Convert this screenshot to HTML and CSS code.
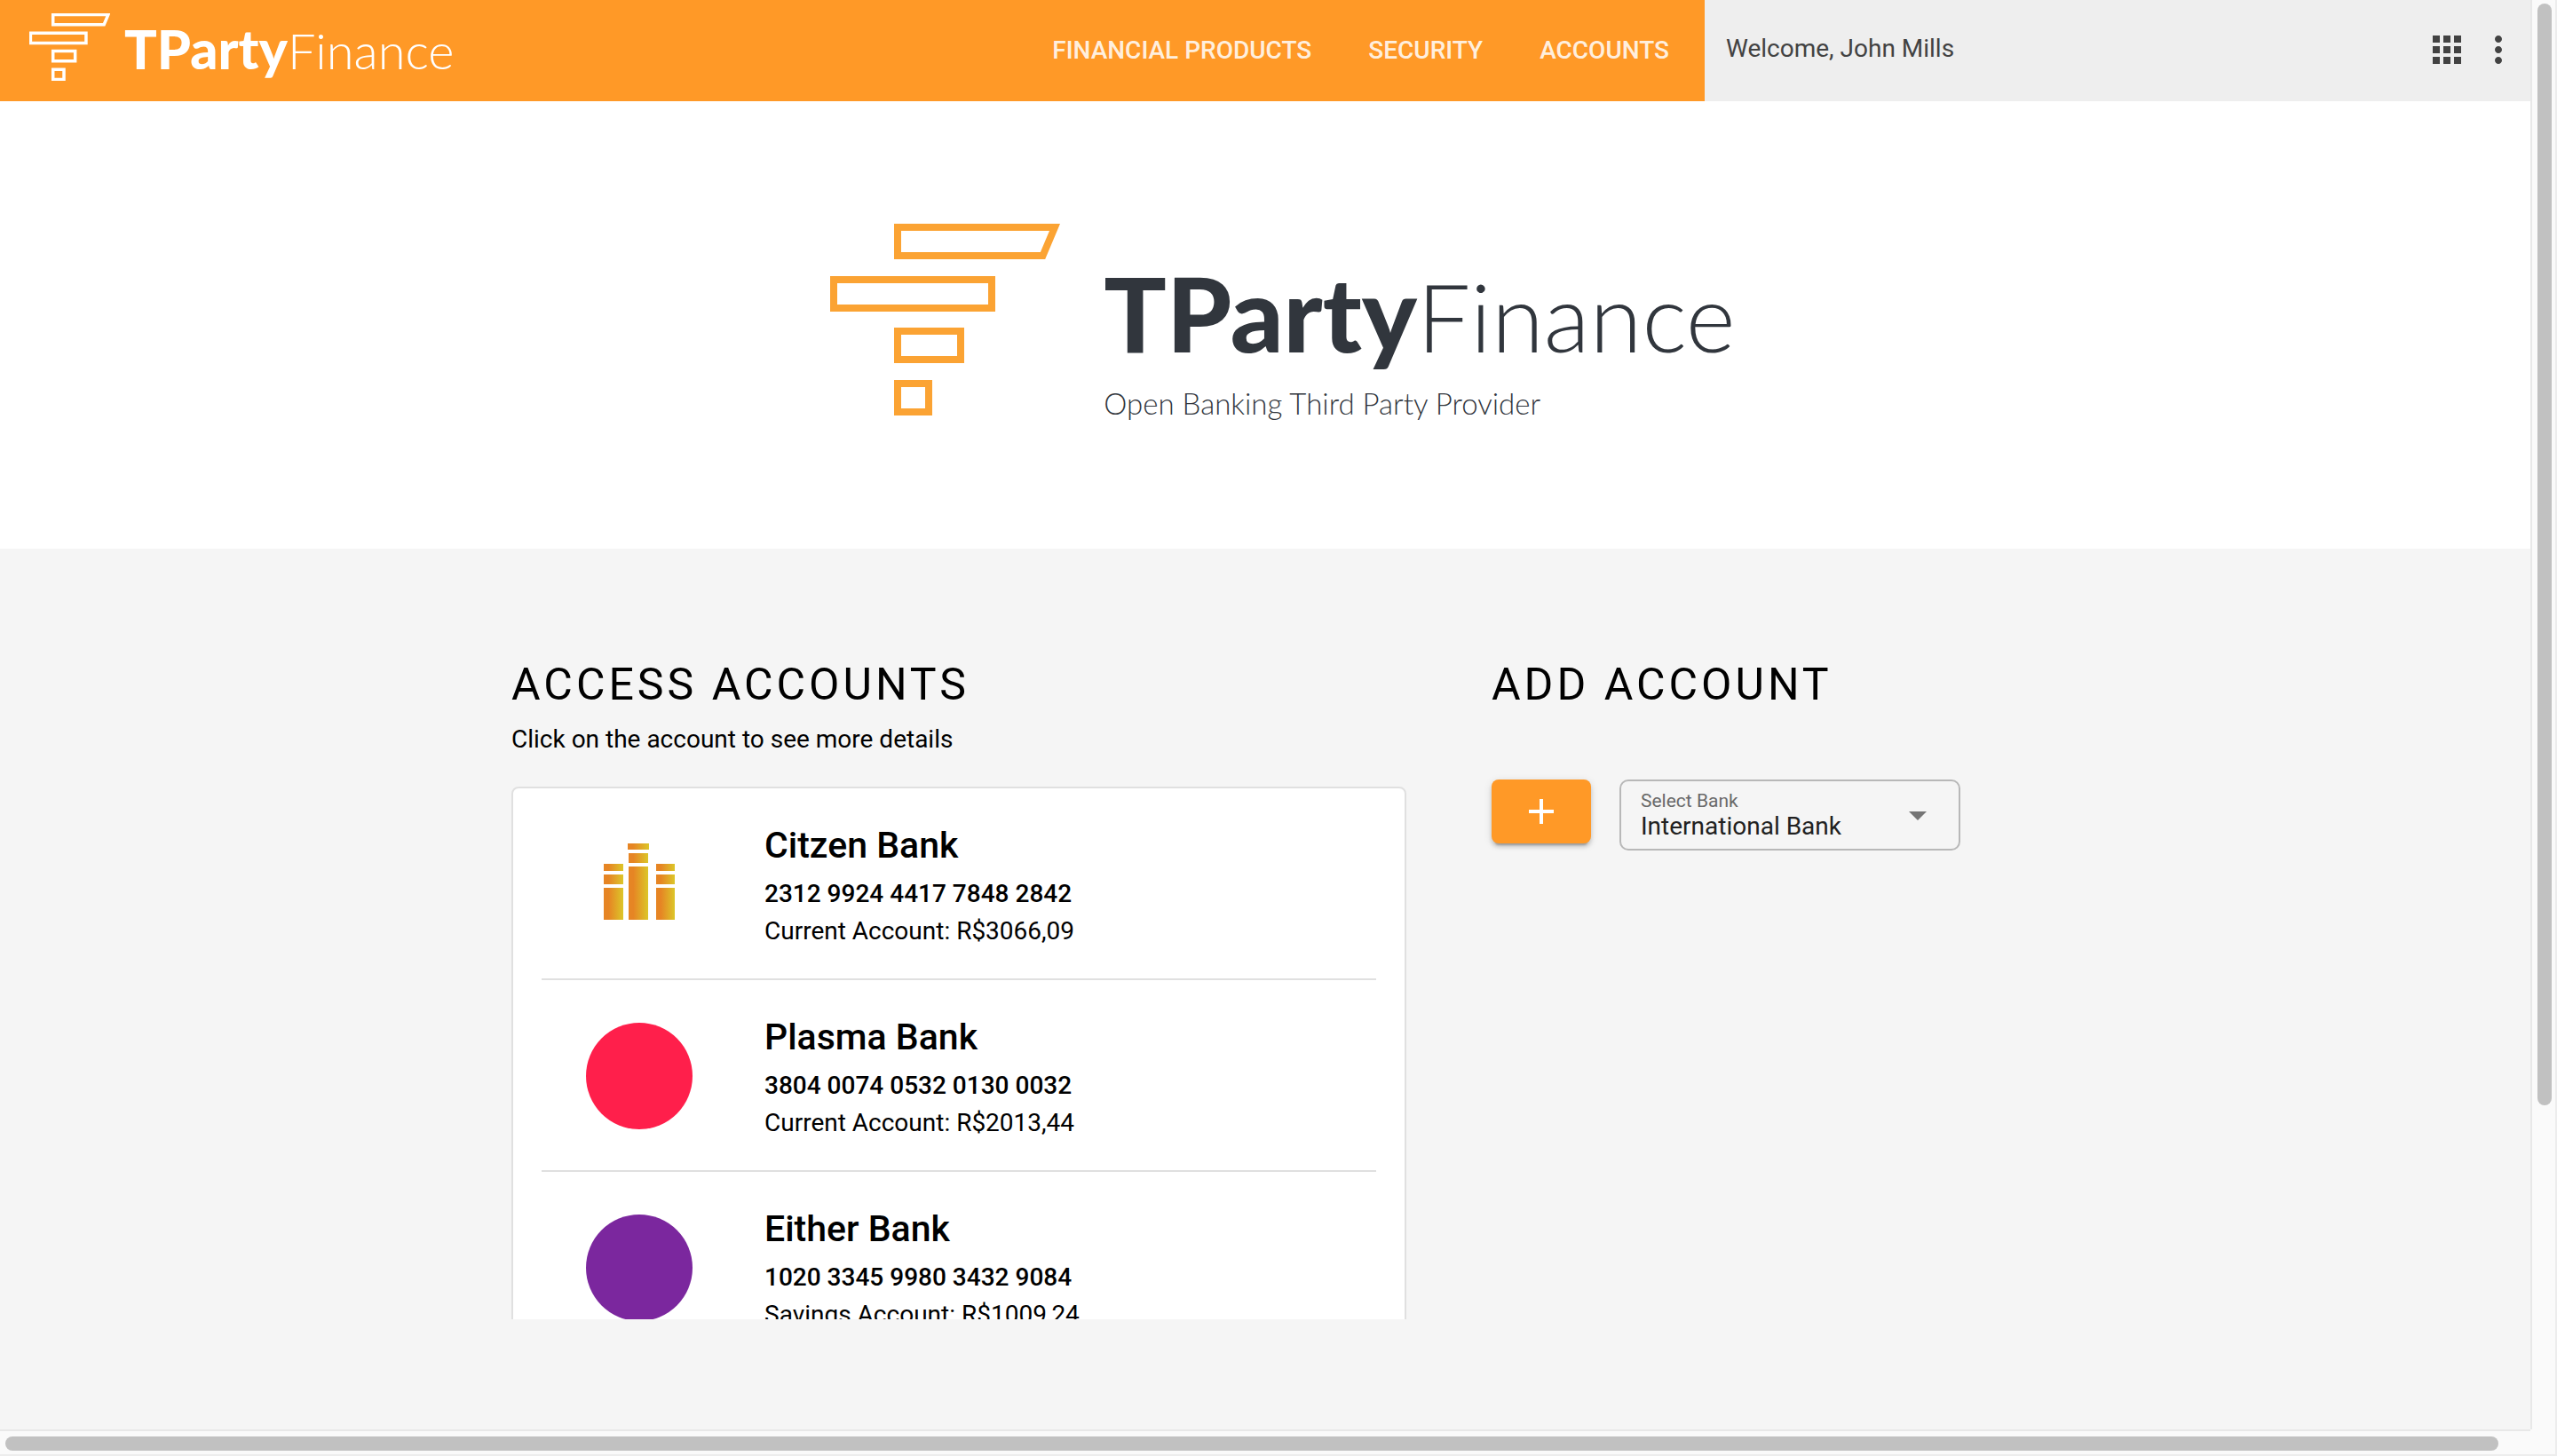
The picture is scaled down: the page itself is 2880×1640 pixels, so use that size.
FILE: index.html
```html
<!DOCTYPE html>
<html lang="en">
<head>
<meta charset="utf-8">
<meta name="viewport" content="width=device-width, initial-scale=1">
<title>TPartyFinance - Accounts</title>
<link rel="stylesheet" href="styles.css">
</head>
<body>
<svg class="symbols" aria-hidden="true">
  <symbol id="mark" viewBox="0 0 259 216">
    <path d="M76 4H253L239.500 36H76ZM4 63H182V95H4ZM76 121H147V153H76ZM76 180H111V212H76Z" fill="none" stroke="currentColor"/>
  </symbol>
</svg>
<div class="viewport">
  <div class="page">
    <header class="topbar">
      <div class="brandbar">
        <a class="brand" href="#" aria-label="TPartyFinance">
          <svg class="brand-mark" aria-hidden="true"><use href="#mark"/></svg>
          <span class="brand-name"><span class="brand-bold">TParty</span><span class="brand-thin">Finance</span></span>
        </a>
        <nav class="nav">
          <a href="#">FINANCIAL PRODUCTS</a>
          <a href="#">SECURITY</a>
          <a href="#">ACCOUNTS</a>
        </nav>
      </div>
      <div class="userbar">
        <span class="welcome">Welcome, John Mills</span>
        <div class="tools">
          <button type="button" class="icon-button" aria-label="Apps">
            <svg viewBox="0 0 24 24" width="48" height="48"><path d="M4 8h4V4H4v4zm6 12h4v-4h-4v4zm-6 0h4v-4H4v4zm0-6h4v-4H4v4zm6 0h4v-4h-4v4zm6-10v4h4V4h-4zm-6 4h4V4h-4v4zm6 6h4v-4h-4v4zm0 6h4v-4h-4v4z"/></svg>
          </button>
          <button type="button" class="icon-button" aria-label="More">
            <svg viewBox="0 0 24 24" width="48" height="48"><path d="M12 8c1.100 0 2-.9 2-2s-.9-2-2-2-2 .9-2 2 .9 2 2 2zm0 2c-1.100 0-2 .9-2 2s.9 2 2 2 2-.9 2-2-.9-2-2-2zm0 6c-1.100 0-2 .9-2 2s.9 2 2 2 2-.9 2-2-.9-2-2-2z"/></svg>
          </button>
        </div>
      </div>
    </header>

    <section class="hero">
      <div class="hero-logo">
        <svg class="hero-mark" aria-hidden="true"><use href="#mark"/></svg>
        <div class="hero-text">
          <div class="hero-name"><span class="brand-bold">TParty</span><span class="brand-thin">Finance</span></div>
          <p class="tagline">Open Banking Third Party Provider</p>
        </div>
      </div>
    </section>

    <main class="content">
      <section class="access">
        <h1>ACCESS ACCOUNTS</h1>
        <p class="hint">Click on the account to see more details</p>
        <div class="scroller">
          <ul class="accounts">
            <li>
              <a class="account" href="#">
                <svg class="logo" viewBox="0 0 120 120" aria-hidden="true">
                  <defs>
                    <linearGradient id="gold"><stop offset=".25" stop-color="#e68524"/><stop offset="1" stop-color="#dcc629"/></linearGradient>
                  </defs>
                  <g fill="url(#gold)">
                    <path d="M20 37h22v8H20z"/><path d="M20 49h22v11H20z"/><path d="M20 64h22v36H20z"/>
                    <path d="M47 14h24v7H47z"/><path d="M48 25h22v11H48z"/><path d="M48 40h22v60H48z"/>
                    <path d="M79 37h21v8H79z"/><path d="M79 49h21v11H79z"/><path d="M79 64h21v36H79z"/>
                  </g>
                </svg>
                <span class="details">
                  <span class="bank">Citzen Bank</span>
                  <span class="number">2312 9924 4417 7848 2842</span>
                  <span class="balance">Current Account: R$3066,09</span>
                </span>
              </a>
            </li>
            <li>
              <a class="account" href="#">
                <span class="logo disc plasma"></span>
                <span class="details">
                  <span class="bank">Plasma Bank</span>
                  <span class="number">3804 0074 0532 0130 0032</span>
                  <span class="balance">Current Account: R$2013,44</span>
                </span>
              </a>
            </li>
            <li>
              <a class="account" href="#">
                <span class="logo disc either"></span>
                <span class="details">
                  <span class="bank">Either Bank</span>
                  <span class="number">1020 3345 9980 3432 9084</span>
                  <span class="balance">Savings Account: R$1009,24</span>
                </span>
              </a>
            </li>
          </ul>
        </div>
      </section>

      <section class="add">
        <h1>ADD ACCOUNT</h1>
        <form class="add-form">
          <button type="button" class="add-button" aria-label="Add account">
            <svg viewBox="0 0 28 28" width="28" height="28"><path d="M12 0h4v12h12v4H16v12h-4V16H0v-4h12z" fill="#fff"/></svg>
          </button>
          <div class="field">
            <label for="bank">Select Bank</label>
            <select id="bank"><option>International Bank</option></select>
            <svg class="arrow" viewBox="0 0 20 10" aria-hidden="true"><path d="M0 0h20L10 10z"/></svg>
          </div>
        </form>
      </section>
    </main>
  </div>

  <div class="track track-y" aria-hidden="true"><div class="thumb"></div></div>
  <div class="track track-x" aria-hidden="true"><div class="thumb"></div></div>
  <div class="corner" aria-hidden="true"></div>
</div>
</body>
</html>
```
FILE: styles.css
```css
*, *::before, *::after { box-sizing: border-box; }

body {
  margin: 0;
  font: 400 28px/42px Roboto, "Liberation Sans", sans-serif;
  color: #000;
}

h1, p, ul { margin: 0; padding: 0; }
a { color: inherit; text-decoration: none; }
button { border: 0; padding: 0; cursor: pointer; }
.symbols { position: absolute; width: 0; height: 0; }

.viewport {
  display: grid;
  grid-template: minmax(0, 1fr) 30px / minmax(0, 1fr) 30px;
  height: 100vh;
}

.page {
  display: flex;
  flex-direction: column;
  overflow: hidden;
  background: #f5f5f5;
}

/* Top bar */
.topbar {
  display: flex;
  flex: none;
  height: 114px;
}

.brandbar {
  display: flex;
  flex: 1;
  align-items: center;
  justify-content: space-between;
  padding: 0 40px 0 33px;
  background: #ff9927;
}

.brand {
  display: flex;
  align-items: center;
  gap: 16px;
  color: #fff;
}

.brand-mark {
  width: 91px;
  height: 76px;
  margin-bottom: 8px;
  stroke-width: 10;
}

.brand-name, .hero-name {
  font-family: Lato, "Liberation Sans", sans-serif;
  white-space: nowrap;
}

.brand-name { font-size: 56px; line-height: 76px; padding-bottom: 2px; }
.brand-name .brand-bold { font-size: 61px; }
.brand-bold { font-weight: 900; }
.brand-thin { font-weight: 300; }

.nav {
  display: flex;
  gap: 64px;
  font-weight: 500;
  color: rgba(255, 255, 255, .87);
}

.userbar {
  display: flex;
  flex: 0 1 930px;
  align-items: center;
  justify-content: space-between;
  padding: 0 12px 0 24px;
  background: #eee;
  color: #424242;
}

.welcome { padding-bottom: 4px; }
.tools { display: flex; gap: 10px; padding-bottom: 2px; }
.icon-button { display: flex; width: 48px; height: 48px; background: none; }
.icon-button svg { fill: #424242; }

/* Hero */
.hero {
  display: flex;
  flex: none;
  justify-content: center;
  height: 504px;
  padding: 138px 0 0 40px;
  background: #fff;
}

.hero-logo { display: flex; gap: 49px; }
.hero-mark { width: 259px; height: 216px; color: #fba333; stroke-width: 8; }
.hero-text { padding-top: 36px; color: #31363d; }
.hero-name { font-size: 107px; line-height: 128px; }
.hero-name .brand-bold { font-size: 117px; }
.tagline {
  font: 300 33px/48px Lato, "Liberation Sans", sans-serif;
  padding-top: 10px;
}

/* Content */
.content {
  display: grid;
  grid-template-columns: 1008px 1fr;
  gap: 96px;
  width: 100%;
  max-width: 1698px;
  margin: 0 auto;
  padding-top: 121px;
}

h1 {
  font-weight: 400;
  font-size: 50px;
  line-height: 64px;
  letter-spacing: 4px;
}

.hint { padding-top: 9px; }

.scroller {
  height: 600px;
  margin-top: 32px;
  overflow: hidden;
}

.accounts {
  list-style: none;
  padding: 0 32px;
  border: 2px solid #e0e0e0;
  border-radius: 8px;
  background: #fff;
}

.accounts li + li { border-top: 2px solid #e0e0e0; }

.account {
  display: flex;
  gap: 81px;
  height: 214px;
  padding: 40px 50px 0;
}

.logo { flex: none; width: 120px; height: 120px; margin-top: 8px; }
.disc { border-radius: 50%; }
.plasma { background: #ff1f4b; }
.either { background: #7b279e; }

.details { display: flex; flex-direction: column; }
.bank { font-weight: 500; font-size: 41px; line-height: 48px; margin-bottom: 10px; }
.number { font-weight: 500; }

/* Add account */
.add-form {
  display: flex;
  align-items: flex-start;
  gap: 32px;
  margin-top: 75px;
}

.add-button {
  display: flex;
  align-items: center;
  justify-content: center;
  width: 112px;
  height: 72px;
  border-radius: 8px;
  background: #ff9927;
  box-shadow: 0 6px 2px -4px rgba(0, 0, 0, .2), 0 4px 4px rgba(0, 0, 0, .14), 0 2px 10px rgba(0, 0, 0, .12);
}

.field { position: relative; width: 384px; }

.field label {
  position: absolute;
  top: 10px;
  left: 24px;
  font-size: 21px;
  line-height: 28px;
  color: #696969;
}

.field select {
  display: block;
  width: 100%;
  height: 80px;
  padding: 26px 72px 0 22px;
  border: 2px solid #b8b8b8;
  border-radius: 10px;
  appearance: none;
  background: none;
  font: inherit;
  color: #212121;
}

.arrow {
  position: absolute;
  top: 36px;
  right: 38px;
  width: 20px;
  height: 10px;
  fill: #757575;
  pointer-events: none;
}

/* Scroll tracks */
.track, .corner { background: #fafafa; }
.track-y { border-left: 2px solid #e8e8e8; border-right: 2px solid #ededed; padding: 4px 4px 0 6px; }
.track-x { border-top: 2px solid #e8e8e8; border-bottom: 2px solid #ededed; padding: 6px 36px 0 6px; }
.corner { border-right: 2px solid #ededed; border-bottom: 2px solid #ededed; }
.thumb { border-radius: 8px; background: #c1c1c1; }
.track-y .thumb { height: 77.300%; }
.track-x .thumb { height: 16px; }
```
